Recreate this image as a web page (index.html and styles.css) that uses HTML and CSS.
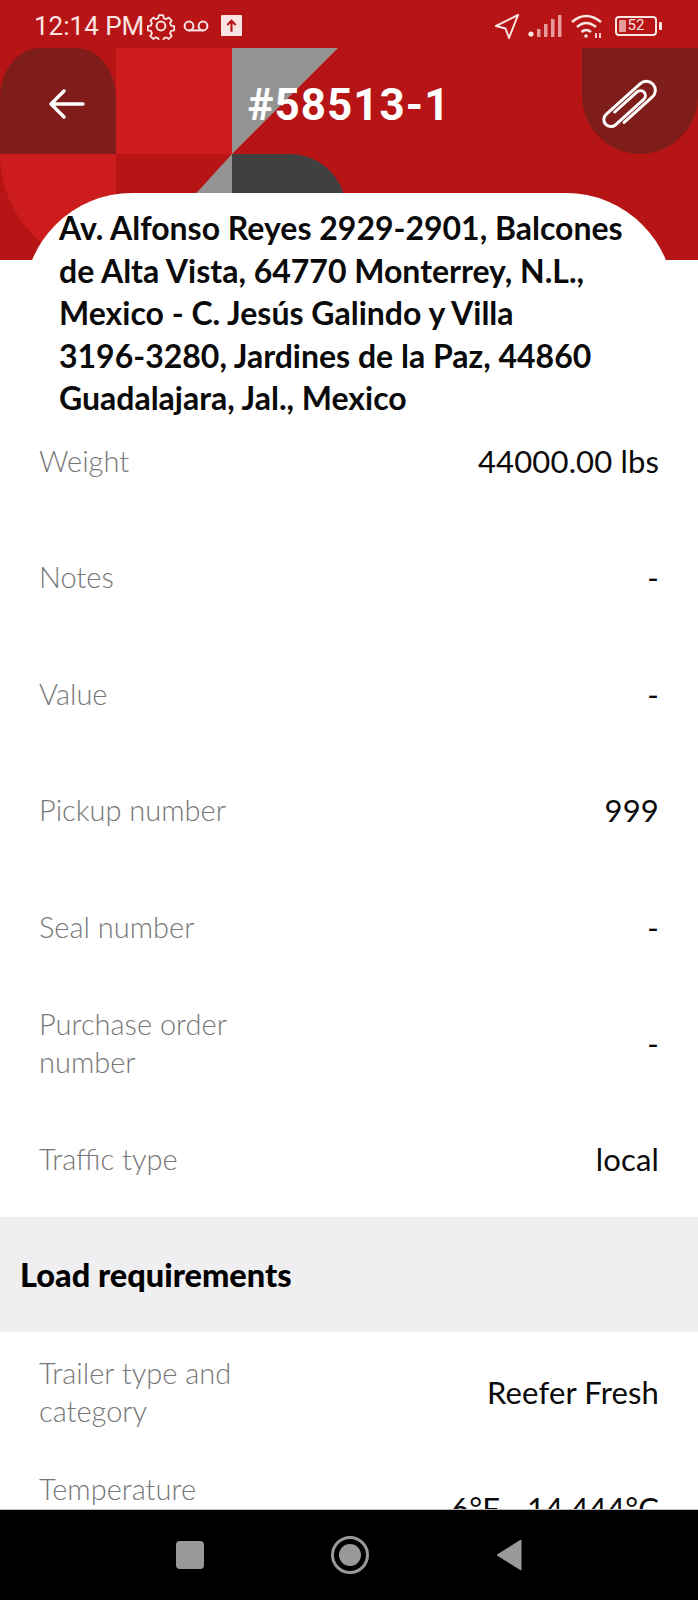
FILE: index.html
```html
<!DOCTYPE html>
<html lang="en">
<head>
<meta charset="utf-8">
<title>#58513-1</title>
<link rel="stylesheet" href="styles.css">
</head>
<body>
<div class="screen">
  <header class="hero">
    <svg class="hero-art" viewBox="0 0 698 260" width="698" height="260" aria-hidden="true">
      <path class="bright" d="M116 48H232V154H116Z"/>
      <path class="bright" d="M0 154H116V270A116 116 0 0 1 0 154Z"/>
      <path class="gray" d="M232 48H338L232 154Z"/>
      <path class="gray" d="M232 154V200H190Z"/>
      <path class="dark" d="M232 154H290A56 56 0 0 1 345 200H232Z"/>
    </svg>
    <div class="status">
      <div class="status-side">
        <span class="time">12:14 PM</span>
        <svg class="ic-gear" viewBox="0 0 24 24" width="28" height="28" fill="none" stroke="currentColor" stroke-width="1.7" stroke-linejoin="round"><path d="M10 2h4l.6 3 2.2 1 2.6-1.6 2.8 2.9-1.6 2.5 1 2.2 3 .6v4l-3 .6-1 2.2 1.6 2.6-2.8 2.8-2.6-1.6-2.2 1-.6 3h-4l-.6-3-2.2-1-2.6 1.6-2.8-2.8 1.6-2.6-1-2.2-3-.6v-4l3-.6 1-2.2L1.8 7.3l2.8-2.9L7.2 6l2.2-1z" transform="translate(1.2 .8) scale(.9)"/><circle cx="12" cy="12" r="3.8"/></svg>
        <svg class="ic-vm" viewBox="0 0 26 12" width="26" height="12" fill="none" stroke="currentColor" stroke-width="2"><circle cx="6" cy="6" r="4.4"/><circle cx="20" cy="6" r="4.4"/><path d="M6 10.4H20"/></svg>
        <svg class="ic-up" viewBox="0 0 20 20" width="21" height="21"><rect width="20" height="20" rx="1" fill="#fbe4e4"/><path d="M10 16V6M6 9.5 10 5.500 14 9.500" fill="none" stroke="#b71515" stroke-width="2"/></svg>
      </div>
      <div class="status-side right">
        <svg viewBox="0 0 26 26" width="26" height="26" fill="none" stroke="currentColor" stroke-width="2" stroke-linejoin="round"><path d="M24 2 2 13l9.500 2.500L15 25Z"/></svg>
        <svg class="ic-signal" viewBox="0 0 34 24" width="34" height="24" fill="#e79a9a"><circle cx="3" cy="20" r="2.600" fill="#fbe4e4"/><rect x="9" y="15" width="3.500" height="8"/><rect x="16" y="10" width="3.500" height="13"/><rect x="23" y="5" width="3.500" height="18"/><rect x="30" y="1" width="3.500" height="22"/></svg>
        <svg class="ic-wifi" viewBox="0 0 34 26" width="34" height="26" fill="none" stroke="currentColor" stroke-width="2.600"><path d="M2 9Q16-3 31 9"/><path d="M7 14Q16 6 26 14"/><path d="M11.500 19Q16 15 21 19"/><circle cx="16" cy="23" r="1.800" fill="currentColor" stroke="none"/><path d="M26 20v5M30 20v5" stroke-width="1.800"/></svg>
        <div class="battery"><span class="battery-fill"></span><span class="battery-num">52</span><span class="battery-cap"></span></div>
      </div>
    </div>
    <div class="bar">
      <button class="tile tile-back" aria-label="Back">
        <svg viewBox="0 0 36 30" width="36" height="30" fill="none" stroke="#fff" stroke-width="3.400" stroke-linecap="round" stroke-linejoin="round"><path d="M34 15H2M15 2 2 15 15 28" /></svg>
      </button>
      <h1 class="title">#58513-1</h1>
      <button class="tile tile-clip" aria-label="Attachments">
        <svg viewBox="-32 -32 64 64" width="64" height="64" fill="none" stroke="#fff" stroke-width="3" stroke-linecap="round" stroke-linejoin="round"><path transform="rotate(-42) translate(-30 0)" d="M14 9H52A9 9 0 0 0 52-9H6A7 7 0 0 0 6 5H44A5 5 0 0 0 44-5H14"/></svg>
      </button>
    </div>
  </header>

  <main class="content">
    <div class="sheet">
      <p class="address">Av. Alfonso Reyes 2929-2901, Balcones de Alta Vista, 64770 Monterrey, N.L., Mexico - C. Jesús Galindo y Villa<br>3196-3280, Jardines de la Paz, 44860 Guadalajara, Jal., Mexico</p>
    </div>
    <section class="rows rows-first">
      <div class="row"><span class="label">Weight</span><span class="value">44000.00 lbs</span></div>
      <div class="row"><span class="label">Notes</span><span class="value">-</span></div>
      <div class="row"><span class="label">Value</span><span class="value">-</span></div>
      <div class="row"><span class="label">Pickup number</span><span class="value">999</span></div>
      <div class="row"><span class="label">Seal number</span><span class="value">-</span></div>
      <div class="row"><span class="label">Purchase order number</span><span class="value">-</span></div>
      <div class="row"><span class="label">Traffic type</span><span class="value">local</span></div>
    </section>
    <h2 class="band">Load requirements</h2>
    <section class="rows rows-second">
      <div class="row"><span class="label">Trailer type and category</span><span class="value">Reefer Fresh</span></div>
      <div class="row"><span class="label">Temperature range</span><span class="value">6°F - 14.444°C</span></div>
    </section>
  </main>

  <nav class="navbar">
    <span class="nav-square"></span>
    <span class="nav-circle"><span class="nav-dot"></span></span>
    <svg viewBox="0 0 26 32" width="26" height="32"><path d="M25 1 1 16 25 31Z" fill="#999" stroke="#999" stroke-linejoin="round"/></svg>
  </nav>
</div>
</body>
</html>
```
FILE: styles.css
```css
* { box-sizing: border-box; }
html, body { margin: 0; padding: 0; }
body { font-family: "Lato", "Liberation Sans", sans-serif; background: #fff; }
.screen { width: 698px; height: 1600px; display: flex; flex-direction: column; overflow: hidden; }

.hero { position: relative; height: 260px; flex: none; background: #b71515; color: #fbe4e4; }
.hero-art { position: absolute; left: 0; top: 0; }
.bright { fill: #cd1c1c; }
.gray { fill: #949494; }
.dark { fill: #404040; }

.status { position: relative; height: 48px; display: flex; justify-content: space-between; align-items: center; padding: 3px 36px 0 34px; }
.status-side { display: flex; align-items: center; }
.status-side.right { gap: 8px; }
.time { font: 400 26px/1 "Roboto", sans-serif; margin-right: 3px; white-space: nowrap; }
.ic-vm { margin-left: 8px; }
.ic-up { margin-left: 12px; }
.battery { position: relative; width: 42px; height: 20px; border: 2px solid #fbe4e4; border-radius: 4px; margin-left: 3px; margin-right: 5px; display: flex; align-items: center; justify-content: center; }
.battery-fill { position: absolute; left: 2px; top: 2px; bottom: 2px; width: 7px; background: #e79a9a; border-radius: 1px; }
.battery-num { position: relative; font: 400 15px/1 "Roboto", sans-serif; }
.battery-cap { position: absolute; right: -7px; top: 4px; width: 3px; height: 8px; background: #fbe4e4; border-radius: 1px; }

.bar { position: relative; height: 106px; display: flex; justify-content: space-between; }
.tile { width: 116px; height: 106px; border: 0; padding: 0; background: #7f1d1b; display: flex; align-items: center; justify-content: center; }
.tile-back { border-radius: 40px 40px 0 0 / 50px 50px 0 0; padding: 6px 0 0 18px; }
.tile-clip { border-radius: 0 0 58px 58px; padding: 8px 20px 0 0; }
.title { margin: 0; font: 700 44px/1 "Roboto", sans-serif; color: #fff; letter-spacing: 1px; padding-top: 35px; }

.content { flex: 1; min-height: 0; position: relative; }
.sheet { margin: -67px 24px 0; background: #fff; border-radius: 108px 108px 0 0; padding: 14px 50px 0 35px; }
.address { margin: 0; font-size: 32px; line-height: 42.600px; font-weight: 700; color: #0a0a0a; }

.rows { display: flex; flex-direction: column; gap: 38.400px; padding: 0 39px; }
.rows-first { padding-top: 2px; padding-bottom: 18.600px; }
.rows-second { padding-top: 21px; }
.row { height: 78px; display: flex; justify-content: space-between; align-items: center; gap: 24px; }
.label { width: 220px; font-size: 29px; line-height: 38px; font-weight: 300; color: #777; }
.value { font-size: 31px; font-weight: 400; letter-spacing: .15px; color: #0a0a0a; white-space: nowrap; }
.band { margin: 0; height: 115px; background: #efeff1; display: flex; align-items: center; padding-left: 20px; font-size: 32.500px; font-weight: 900; color: #000; }

.navbar { flex: none; height: 91px; background: #000; display: flex; justify-content: center; align-items: center; gap: 127px; border-top: 1px solid #bbb; position: relative; }
.nav-square { width: 28px; height: 28px; border-radius: 4px; background: #999; }
.nav-circle { width: 38px; height: 38px; border-radius: 50%; border: 3px solid #999; display: flex; align-items: center; justify-content: center; }
.nav-dot { width: 22px; height: 22px; border-radius: 50%; background: #999; }
```
